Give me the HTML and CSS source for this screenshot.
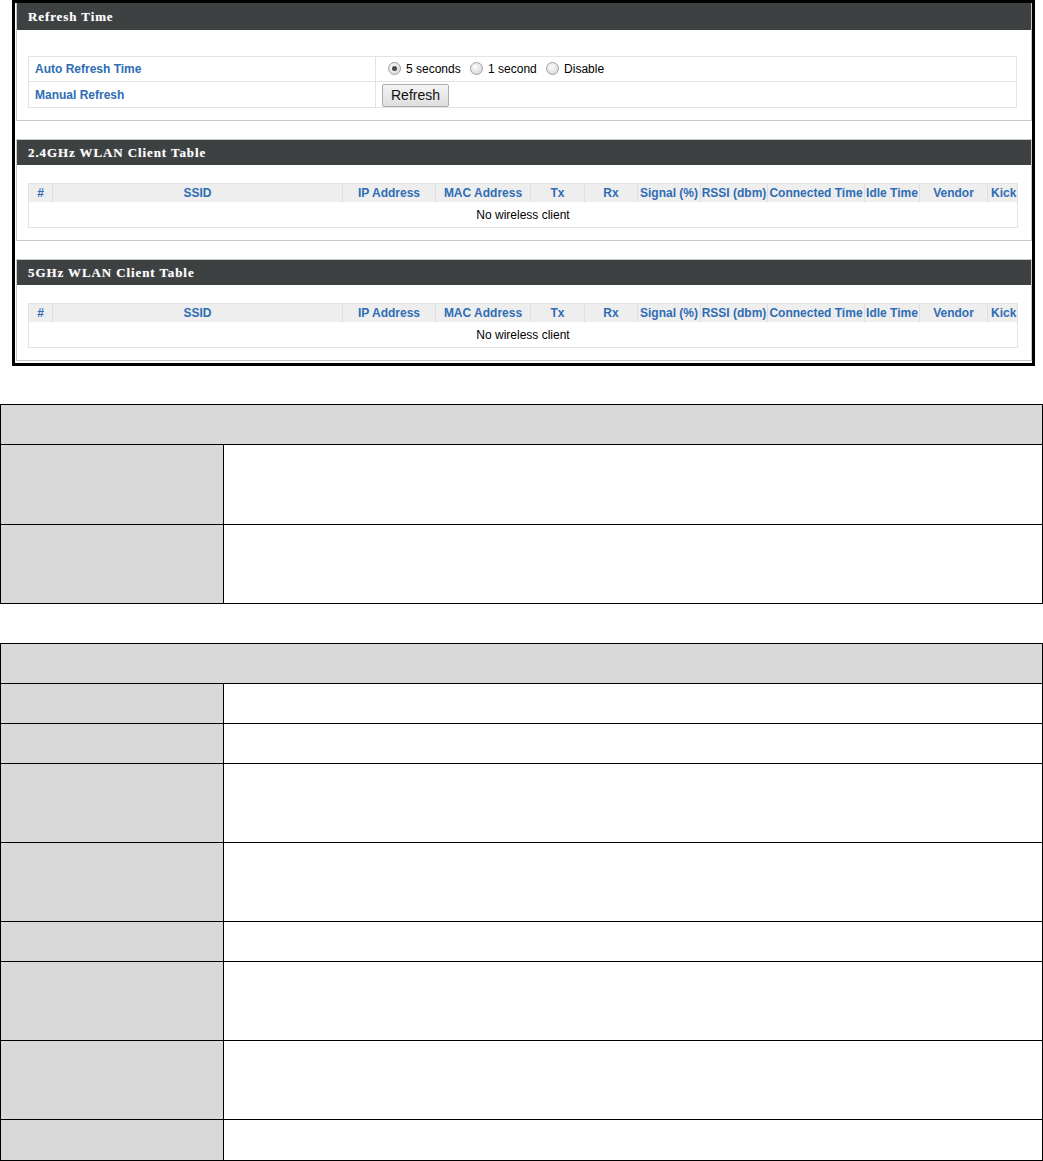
FILE: index.html
```html
<!DOCTYPE html>
<html lang="en">
<head>
    <meta charset="UTF-8">
    <title>WLAN Client Table</title>
    <link rel="stylesheet" href="styles.css">
</head>
<body>
    <div class="shot">
        <section class="panel">
            <h2 class="panel-title">Refresh Time</h2>
            <table class="form-table">
                <tr>
                    <td class="label">Auto Refresh Time</td>
                    <td>
                        <span class="radio checked"></span><span class="opt">5 seconds</span>
                        <span class="radio"></span><span class="opt">1 second</span>
                        <span class="radio"></span><span class="opt">Disable</span>
                    </td>
                </tr>
                <tr>
                    <td class="label">Manual Refresh</td>
                    <td><button class="btn">Refresh</button></td>
                </tr>
            </table>
        </section>

        <section class="panel">
            <h2 class="panel-title">2.4GHz WLAN Client Table</h2>
            <table class="client-table">
                <colgroup>
                    <col style="width:24px"><col style="width:290px"><col style="width:93px"><col style="width:95px">
                    <col style="width:54px"><col style="width:53px"><col style="width:63px"><col style="width:67px">
                    <col style="width:97px"><col style="width:55px"><col style="width:68px"><col style="width:30px">
                </colgroup>
                <tr>
                    <th>#</th><th>SSID</th><th>IP Address</th><th>MAC Address</th><th>Tx</th><th>Rx</th>
                    <th>Signal (%)</th><th>RSSI (dbm)</th><th>Connected Time</th><th>Idle Time</th><th>Vendor</th><th class="kick">Kick</th>
                </tr>
                <tr>
                    <td colspan="12">No wireless client</td>
                </tr>
            </table>
        </section>

        <section class="panel">
            <h2 class="panel-title">5GHz WLAN Client Table</h2>
            <table class="client-table">
                <colgroup>
                    <col style="width:24px"><col style="width:290px"><col style="width:93px"><col style="width:95px">
                    <col style="width:54px"><col style="width:53px"><col style="width:63px"><col style="width:67px">
                    <col style="width:97px"><col style="width:55px"><col style="width:68px"><col style="width:30px">
                </colgroup>
                <tr>
                    <th>#</th><th>SSID</th><th>IP Address</th><th>MAC Address</th><th>Tx</th><th>Rx</th>
                    <th>Signal (%)</th><th>RSSI (dbm)</th><th>Connected Time</th><th>Idle Time</th><th>Vendor</th><th class="kick">Kick</th>
                </tr>
                <tr>
                    <td colspan="12">No wireless client</td>
                </tr>
            </table>
        </section>
    </div>

    <table class="doc-table first">
        <tr class="h40"><th colspan="2">&nbsp;</th></tr>
        <tr class="h80"><td class="key">&nbsp;</td><td>&nbsp;</td></tr>
        <tr class="h79"><td class="key">&nbsp;</td><td>&nbsp;</td></tr>
    </table>

    <table class="doc-table">
        <tr class="h40"><th colspan="2">&nbsp;</th></tr>
        <tr class="h40"><td class="key">&nbsp;</td><td>&nbsp;</td></tr>
        <tr class="h40"><td class="key">&nbsp;</td><td>&nbsp;</td></tr>
        <tr class="h79"><td class="key">&nbsp;</td><td>&nbsp;</td></tr>
        <tr class="h79"><td class="key">&nbsp;</td><td>&nbsp;</td></tr>
        <tr class="h40"><td class="key">&nbsp;</td><td>&nbsp;</td></tr>
        <tr class="h79"><td class="key">&nbsp;</td><td>&nbsp;</td></tr>
        <tr class="h79"><td class="key">&nbsp;</td><td>&nbsp;</td></tr>
        <tr class="h41"><td class="key">&nbsp;</td><td>&nbsp;</td></tr>
    </table>
</body>
</html>
```

FILE: styles.css
```css
body {
    margin: 0;
    font-family: "Liberation Sans", Arial, sans-serif;
    font-size: 12px;
    color: #000;
    background: #fff;
}

/* screenshot frame */
.shot {
    margin-left: 12px;
    width: 1016px;
    border: 3px solid #000;
    padding: 0 0 2px 1px;
}

.panel {
    border: 1px solid #c8c8c8;
    border-top: none;
    margin-bottom: 18px;
    padding-bottom: 12px;
}

.panel:last-child {
    margin-bottom: 0;
}

.panel + .panel {
    border-top: 1px solid #c8c8c8;
}

.panel-title {
    margin: 0;
    height: 27px;
    line-height: 27px;
    padding-left: 11px;
    background: #3e4142;
    color: #fff;
    font-family: "Liberation Serif", "Times New Roman", serif;
    font-size: 13px;
    font-weight: bold;
    letter-spacing: 0.9px;
    text-shadow: 0 0 1px rgba(255,255,255,0.4);
}

.panel + .panel .panel-title {
    height: 25px;
    line-height: 25px;
}

.form-table, .client-table {
    border-collapse: collapse;
    margin: 26px 13px 0 11px;
    width: 989px;
}

.client-table {
    table-layout: fixed;
    margin-top: 18px;
}

.form-table td {
    border: 1px solid #e3e3e3;
    padding: 0 6px;
    height: 24px;
    vertical-align: middle;
}

.form-table tr:last-child td {
    height: 25px;
}

.form-table .label {
    width: 334px;
    color: #2e6db4;
    font-weight: bold;
}

.radio {
    display: inline-block;
    width: 11px;
    height: 11px;
    border: 1px solid #a0a0a0;
    border-radius: 50%;
    background: radial-gradient(circle at 40% 35%, #fbfbfb, #d2d2d2);
    vertical-align: -2px;
    position: relative;
    margin: 0 5px 0 6px;
}

.radio.checked::after {
    content: "";
    position: absolute;
    left: 3px;
    top: 3px;
    width: 5px;
    height: 5px;
    border-radius: 50%;
    background: #4a4a4a;
}

.btn {
    font-family: "Liberation Sans", Arial, sans-serif;
    font-size: 14px;
    color: #111;
    height: 23px;
    padding: 0 8px;
    border: 1px solid #adadad;
    border-radius: 2px;
    background: linear-gradient(#f4f4f4, #dedede);
    margin-top: 1px;
}

.client-table {
    border: 1px solid #e3e3e3;
}

.client-table th {
    background: #eeeeee;
    color: #2e6db4;
    font-weight: bold;
    height: 18px;
    padding: 0;
    text-align: center;
    white-space: nowrap;
    border-left: 1px solid #dedede;
}

.client-table th:first-child {
    border-left: none;
}

.client-table th.kick {
    text-align: left;
    padding-left: 3px;
}

.client-table td {
    height: 23px;
    text-align: center;
}

/* document tables below */
.doc-table {
    border-collapse: collapse;
    width: 1043px;
    margin-top: 39px;
}

.doc-table.first {
    margin-top: 38px;
}

.doc-table th, .doc-table td {
    border: 1px solid #000;
    padding: 0;
}

.doc-table th {
    background: #d9d9d9;
}

.doc-table .key {
    width: 222px;
    background: #d9d9d9;
}

.h40 { height: 40px; }
.h41 { height: 41px; }
.h79 { height: 79px; }
.h80 { height: 80px; }
```
